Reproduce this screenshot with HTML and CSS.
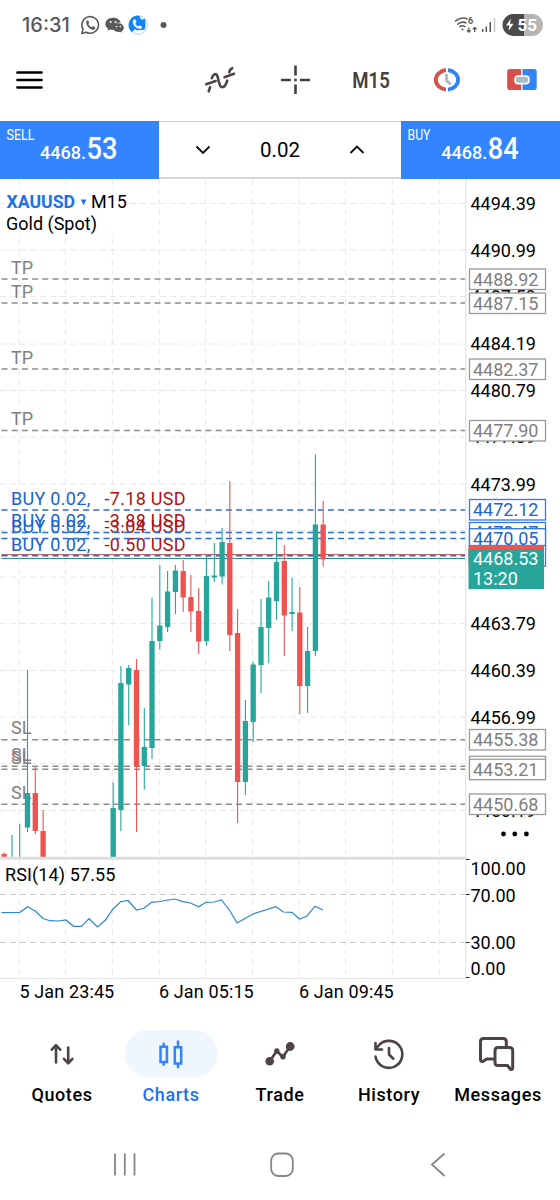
FILE: index.html
```html
<!DOCTYPE html>
<html lang="en">

<head>
    <meta charset="utf-8">
    <meta name="viewport" content="width=device-width, initial-scale=1.0">
    <title>XAUUSD M15</title>
    <link rel="stylesheet" href="styles.css">
</head>

<body>
    <header class="status">
        <span class="time">16:31</span>
        <svg class="status-icons" width="92" height="24" viewBox="78.500 13 92 24">
            <!-- whatsapp -->
            <path class="g-line" d="M82.400 33.400l1.200-4.200a8.300 8.300 0 1 1 3.100 3z" />
            <path class="g-fill" d="M87 20.800c.8-.9 1.700-.6 2 .2l.6 1.500c.2.600-.8 1.300-.6 1.700.6 1.300 1.700 2.200 3 2.800.5.200 1.200-1 1.700-.8l1.700.9c.8.500.4 1.800-.5 2.300-3.600 1.900-9.600-4.400-7.900-8.600z" />
            <!-- wechat -->
            <path class="g-fill" d="M113.500 17.800c-4.500 0-7.600 2.900-7.600 6.200 0 2 1 3.700 2.700 4.800l-.6 2 2.500-1.200c1.200.3 2.300.4 3.600.3-.7-4.700 2.800-7.400 7.200-7.300-.8-2.900-4-4.800-7.800-4.800z" />
            <path class="g-fill" d="M118.800 23.200c3.200 0 5.500 2 5.500 4.500 0 1.500-.8 2.700-2 3.500l.4 1.600-1.900-1c-3.700.9-7.400-1-7.400-4.200 0-2.400 2.300-4.400 5.400-4.400z" />
            <g fill="#fff"><circle cx="111.200" cy="22" r="1" /><circle cx="116" cy="22" r="1" /><circle cx="117" cy="26.600" r=".8" /><circle cx="120.800" cy="26.600" r=".8" /></g>
            <!-- caller app -->
            <circle cx="138.700" cy="25" r="9.300" fill="#fff" stroke="#a9d3fb" />
            <path fill="#1583f5" d="M138.700 15.400a9.600 9.600 0 0 0-6.500 16.600l2.300-1.500.3-1.500 2.700 1.200 7.500-.5 1-3.500-.2-7.200-4.300.5-1.300-3.300z" />
            <path fill="#fff" d="M133.600 20l2-1 1.400 3-1.200 1.200c.5 1.500 1.500 2.600 3 3.300l1.400-1.200 2.500 1.600-.8 1.500c-4.500 1.500-9.700-3.500-8.300-8.400z" />
            <circle class="g-fill" cx="164" cy="25" r="3" />
        </svg>
        <svg class="status-right" width="92" height="26" viewBox="453 12 92 26">
            <g class="g-line">
                <path d="M455 21.500q6.500-5.500 12.500-2.500M457.200 24.500q4.700-3.800 9.300-1.500M459.300 27q3-2.500 6 0" />
                <path stroke-width="1.300" d="M468.800 27.500v4.500m-1.900-1.800l1.900 1.900 1.900-1.900M474.700 32v-4.500m-1.800 1.800l1.800-1.900 1.800 1.900" />
            </g>
            <circle class="g-fill" cx="462.500" cy="29.500" r="1" />
            <text class="wifi-six" x="468" y="24">6</text>
            <path stroke="#555" stroke-width="1.500" d="M482.700 32v-3M486.300 32v-5.500M490.300 32v-10" />
            <path stroke="#c4c4c4" stroke-width="1.500" d="M494.500 32V18" />
            <path fill="#4a4a4a" d="M524 14h-10.500a11 11 0 0 0 0 22H524z" />
            <path fill="#b5b5b5" d="M524 14h8a11 11 0 0 1 0 22h-8z" />
            <path fill="#fff" d="M511 18.500l-5 7h3.500l-1 5.500 5-7.300h-3.600z" />
            <text class="battery" x="517.500" y="31" textLength="19.500" lengthAdjust="spacingAndGlyphs">55</text>
        </svg>
    </header>

    <div class="toolbar">
        <svg class="menu" width="27" height="18" viewBox="0 0 27 18">
            <path stroke="#000" stroke-width="2.700" stroke-linecap="round" d="M1.500 1.500h24M1.500 9h24M1.500 16.500h24" />
        </svg>
        <div class="tools">
            <svg class="tool" width="32" height="28" viewBox="204 66 32 28">
                <path class="d-line" stroke-width="2.600" d="M206.200 84.200l9.500-3.200M224.500 77.200l9.500-3.400M208.700 91.200l1.400-4M211.800 78.200c1.300-4 3.800-5.200 5.200-3 2 3.300 1.500 12 5.200 12 3 0 4.300-4 5-6.500M229.300 72.200c.4-2 1.500-3.500 2.900-4" />
            </svg>
            <svg class="tool" width="32" height="32" viewBox="279.500 64 32 32">
                <path stroke="#453f3f" stroke-width="2.600" d="M281.500 80h9.800M300.500 80h10M296 65.500v10M296 84.500v9.500M294.700 80h2.600" />
            </svg>
            <svg class="tool" width="50" height="30" viewBox="346 65 50 30">
                <text class="tf" x="352.300" y="87.500" textLength="37.500" lengthAdjust="spacingAndGlyphs">M15</text>
            </svg>
            <svg class="tool" width="32" height="26" viewBox="431 67 32 26">
                <path fill="none" stroke="#d8504a" stroke-width="3.800" d="M445.900 70a11.800 9.900 0 0 0 0 19.600" />
                <path fill="none" stroke="#3284f3" stroke-width="3.800" d="M448 70a11.800 9.900 0 0 1 0 19.600" />
                <path stroke="#aebac4" stroke-width="2.800" fill="none" d="M446.500 74v6.300l4.200 4.200" />
            </svg>
            <svg class="tool" width="32" height="26" viewBox="506.500 67 32 26">
                <path fill="#d8504a" d="M521.600 69h-11.400q-2.500 0-2.500 2.500v16q0 2.500 2.500 2.500h11.400z" />
                <path fill="#3284f3" d="M523 69h11.700q2.500 0 2.500 2.500v16q0 2.500-2.500 2.500H523z" />
                <rect x="515.500" y="76" width="14" height="7.600" rx="3.200" fill="#aebac4" stroke="#fff" stroke-width="1.600" />
            </svg>
        </div>
    </div>

    <div class="deal">
        <svg class="side" width="159" height="58" viewBox="0 121 159 58">
            <text class="side-name" x="6.500" y="140" textLength="28" lengthAdjust="spacingAndGlyphs">SELL</text>
            <text class="side-int" x="40" y="159" textLength="46" lengthAdjust="spacingAndGlyphs">4468.</text>
            <text class="side-dec" x="86.500" y="159" textLength="31" lengthAdjust="spacingAndGlyphs">53</text>
        </svg>
        <div class="lot">
            <svg width="16" height="10" viewBox="0 0 16 10"><path d="M1.500 1.500L8 8l6.500-6.500" /></svg>
            <span>0.02</span>
            <svg width="16" height="10" viewBox="0 0 16 10"><path d="M1.500 8L8 1.500 14.500 8" /></svg>
        </div>
        <svg class="side" width="159" height="58" viewBox="401 121 159 58">
            <text class="side-name" x="407.500" y="140" textLength="23" lengthAdjust="spacingAndGlyphs">BUY</text>
            <text class="side-int" x="441.300" y="159" textLength="46" lengthAdjust="spacingAndGlyphs">4468.</text>
            <text class="side-dec" x="487.800" y="159" textLength="31" lengthAdjust="spacingAndGlyphs">84</text>
        </svg>
    </div>

    <svg class="chart" width="560" height="833" viewBox="0 179 560 833">
        <!-- grid -->
        <path class="grid" d="M19.200 179V978M65.600 179V978M112.400 179V978M159.200 179V978M205.700 179V978M252.400 179V978M299 179V978M345.700 179V978M392.300 179V978M439.200 179V978" />
        <path class="grid" d="M0 203.500H465M0 250H465M0 296.500H465M0 344H465M0 390.500H465M0 437.200H465M0 484H465M0 530.500H465M0 577H465M0 623.500H465M0 670.500H465M0 717.200H465M0 763.500H465M0 810.500H465" />
        <path class="grid rsi-level" d="M0 894.500H465M0 942.500H465" />

        <!-- symbol -->
        <rect x="4" y="190" width="125" height="44" fill="#fff" />
        <text class="symbol" x="6.500" y="208" textLength="68.500" lengthAdjust="spacingAndGlyphs">XAUUSD</text>
        <path fill="#1a73e8" d="M80.800 199.500h5.600l-2.800 5.800z" />
        <text x="91" y="208">M15</text>
        <text x="6" y="230">Gold (Spot)</text>

        <!-- take profit / stop loss -->
        <g class="level">
            <text x="11" y="273.500">TP</text>
            <text x="11" y="298">TP</text>
            <text x="11" y="364">TP</text>
            <text x="11" y="425">TP</text>
            <text x="11" y="734.300">SL</text>
            <text x="11" y="761">SL</text>
            <text x="11" y="763.700">SL</text>
            <text x="11" y="799">SL</text>
        </g>
        <path class="dash dash-gray" d="M1.500 279H465M1.500 303H465M1.500 369H465M1.500 430.500H465M1.500 739.800H465M1.500 766.300H465M1.500 769.300H465M1.500 804.300H465" />

        <!-- positions -->
        <g class="pos">
            <text x="11" y="504.500">BUY 0.02,</text><text class="loss" x="104.500" y="504.500">-7.18 USD</text>
            <text x="11" y="527">BUY 0.02,</text><text class="loss" x="104.500" y="527">-3.88 USD</text>
            <text x="11" y="533">BUY 0.02,</text><text class="loss" x="104.500" y="533">-3.04 USD</text>
            <text x="11" y="550.500">BUY 0.02,</text><text class="loss" x="104.500" y="550.500">-0.50 USD</text>
        </g>
        <path class="dash dash-blue" d="M1.500 510H465M1.500 532.500H465M1.500 538.500H465" />
        <path stroke="#c0616b" d="M1.500 554.500H465" />
        <path class="dash dash-blue" d="M1.500 555.800H465" />
        <path stroke="#2a8f8c" d="M1.500 558.500H465" />

        <!-- wicks -->
        <path class="wick up" d="M12 835V857M19.700 824V857M27.500 670V832M113.200 782.500V857M120.900 666V831M128.700 665V725M144.300 708V789.500M152 597.500V759M159.800 565V649.500M167.600 571V632M175.400 565V614M206.500 555V645.500M214.300 543V582M222.100 528V584.500M245.400 700V795M253.200 662V742M261 599V693M268.700 581V663M276.500 531V620M292.100 578V631M307.600 627V713M315.400 454.500V656" />
        <path class="wick down" d="M4.200 852.500V857M35.300 767V834M43.100 810V857M136.500 659V832M183.200 560V612M190.900 575V632M198.700 588V654M229.800 481V651M237.600 609V823M284.300 545V656M299.800 587V714M323.200 501V566.500" />
        <!-- bodies -->
        <path class="body up" d="M27.500 793V827.500M113.200 808V857M120.900 683V810M128.700 668V684.500M144.300 747V766M152 641V748M159.800 625.500V641M167.600 591.500V627M175.400 570.500V592M206.500 576V641M214.300 575.500V577.500M222.100 542V576.500M245.400 721V782M253.200 664.500V722M261 627V665M268.700 597.500V628M276.500 562V601M292.100 612V614M307.600 651V686M315.400 524.500V651" />
        <path class="body down" d="M4.200 854V857M35.300 793V831M43.100 831V857M136.500 670V766.500M183.200 571V597.500M190.900 597V611.500M198.700 611V641.500M229.800 543V635M237.600 633V782M284.300 561V615.500M299.800 612.500V686M323.200 524.500V559.500" />

        <!-- RSI window -->
        <path class="frame" stroke-width="3" d="M0 858.200H466" />
        <path class="frame" d="M465.800 179V978.300M0 978.300H466" />
        <path stroke="#222" d="M466 859.500h3.500M466 894.500h3.500M466 942.500h3.500M466 977.500h3.500" />
        <text class="wide" x="5" y="880.500">RSI(14) 57.55</text>
        <polyline class="rsi" points="1.500,912.700 20,912.300 27.500,906.700 35.300,911 43,918.500 50,920.700 58.700,921 66,920 73.500,926.300 81.500,926.300 89,918.700 97.500,926.900 105.500,920 113,909 120.500,901.700 128,900.500 136.500,910 144,908.300 151.500,902.300 160,901.500 168,900 175,899 182,901.300 190.500,903 198.500,906.800 206,902.300 214,902 221.500,900 230,911 237,923 253,914 276,906.700 283.500,912 292,912.300 299.500,919 307,916 315,906.200 323,910" />

        <!-- price scale -->
        <text x="470.500" y="210">4494.39</text>
        <text x="470.500" y="256.500">4490.99</text>
        <text x="470.500" y="303.300">4487.59</text>
        <text x="470.500" y="350">4484.19</text>
        <text x="470.500" y="396.700">4480.79</text>
        <text x="470.500" y="443.300">4477.39</text>
        <text x="470.500" y="490.500">4473.99</text>
        <text x="470.500" y="630">4463.79</text>
        <text x="470.500" y="677">4460.39</text>
        <text x="470.500" y="723.500">4456.99</text>
        <text x="470.500" y="816.500">4450.19</text>
        <g class="tag">
            <rect x="469.500" y="269" width="76" height="20.500" /><text x="473" y="285.500">4488.92</text>
            <rect x="469.500" y="293" width="76" height="20.500" /><text x="473" y="309.500">4487.15</text>
            <rect x="469.500" y="359" width="76" height="20.500" /><text x="473" y="375.500">4482.37</text>
            <rect x="469.500" y="420.500" width="76" height="20.500" /><text x="473" y="437">4477.90</text>
            <rect x="469.500" y="729.500" width="76" height="20.500" /><text x="473" y="746.300">4455.38</text>
            <rect x="469.500" y="756.300" width="76" height="20.500" />
            <rect x="469.500" y="759.200" width="76" height="20.500" /><text x="473" y="775.800">4453.21</text>
            <rect x="469.500" y="794" width="76" height="20.500" /><text x="473" y="811">4450.68</text>
        </g>
        <g class="tag tag-blue">
            <rect x="469.500" y="499.500" width="76" height="20.500" /><text x="473" y="516.200">4472.12</text>
            <rect x="469.500" y="522.500" width="76" height="20.500" /><text x="473" y="539">4470.47</text>
            <rect x="469.500" y="528.700" width="76" height="20.500" /><text x="473" y="545">4470.05</text>
            <rect x="469.500" y="545.500" width="76" height="20.500" />
        </g>
        <rect x="468.500" y="545" width="75.500" height="20" fill="#ef5350" />
        <rect x="468.500" y="549" width="75.500" height="40" fill="#26a69a" />
        <text class="now" x="473" y="565">4468.53</text>
        <text class="now" x="473" y="585.300">13:20</text>
        <circle cx="503.500" cy="834" r="2.400" /><circle cx="514.800" cy="834" r="2.400" /><circle cx="526.400" cy="834" r="2.400" />

        <text x="470.500" y="875">100.00</text>
        <text x="470.500" y="901.500">70.00</text>
        <text x="470.500" y="949">30.00</text>
        <text x="470.500" y="975">0.00</text>

        <text class="wide" x="19.500" y="998">5 Jan 23:45</text>
        <text class="wide" x="159" y="998">6 Jan 05:15</text>
        <text class="wide" x="299" y="998">6 Jan 09:45</text>
    </svg>

    <nav class="tabs">
        <div class="tab">
            <div class="pill">
                <svg width="28" height="26" viewBox="48.500 1040.500 28 26">
                    <path class="d-line" d="M56.500 1062v-17m-4.200 4.200l4.200-4.500 4.200 4.500M68.700 1047v15.500m-4.200-4.200l4.200 4.500 4.200-4.500" />
                </svg>
            </div>
            <span>Quotes</span>
        </div>
        <div class="tab active">
            <div class="pill">
                <svg width="26" height="32" viewBox="158.500 1037.500 26 32">
                    <path fill="none" stroke="#3284ff" stroke-width="2.500" d="M161 1046.300h6.400v15.200H161zM164.200 1042.300v4M164.200 1061.500v3.800M175.300 1046.800h6.400v16.300h-6.400zM178.500 1040v6.800M178.500 1063v4.800" />
                </svg>
            </div>
            <span>Charts</span>
        </div>
        <div class="tab">
            <div class="pill">
                <svg width="32" height="28" viewBox="264.500 1039.500 32 28">
                    <path class="d-line" stroke-width="2.800" d="M270 1061l7.300-10.500 6 6 7.200-10.500" />
                    <g class="d-fill"><circle cx="270.200" cy="1060.700" r="4.300" /><circle cx="277.300" cy="1050.500" r="2.700" /><circle cx="283.500" cy="1056.200" r="2.700" /><circle cx="290.700" cy="1046" r="4.400" /></g>
                </svg>
            </div>
            <span>Trade</span>
        </div>
        <div class="tab">
            <div class="pill">
                <svg width="34" height="34" viewBox="371.500 1036.500 34 34">
                    <path class="d-line" d="M375 1056a13.500 13.500 0 1 0 2-9.500M375 1042.500v6.500h6.500M388.500 1047.500v6.500l4.300 4.200" />
                </svg>
            </div>
            <span>History</span>
        </div>
        <div class="tab">
            <div class="pill">
                <svg width="38" height="38" viewBox="479 1034.500 38 38">
                    <path class="d-line msg" d="M492.500 1058.500h-6l-3.200 2.300q-2.800 1-2.800-1.800V1041q0-3 3-3h19.800q3 0 3 3v5.500M498 1047h11.700q3 0 3 3v17.500q-.5 2.500-2.500 1l-2.700-3.500h-9.500q-3 0-3-3v-12q0-3 3-3z" />
                </svg>
            </div>
            <span>Messages</span>
        </div>
    </nav>

    <footer class="sysnav">
        <svg width="24" height="26" viewBox="0 0 24 26"><path d="M2 1.500v22M11.800 1.500v22M21.500 1.500v22" /></svg>
        <svg width="24" height="26" viewBox="0 0 24 26"><rect x="1.200" y="1.500" width="21.600" height="22.500" rx="7" /></svg>
        <svg width="24" height="26" viewBox="0 0 24 26"><path d="M17.500 1.500L5 12.500l12.500 11.500" /></svg>
    </footer>
</body>

</html>
```
FILE: styles.css
```css
* {
    margin: 0;
    padding: 0;
    box-sizing: border-box;
}

body {
    width: 560px;
    height: 1200px;
    background-color: #fff;
    font-family: Roboto, "Liberation Sans", sans-serif;
    color: #000;
    overflow: hidden;
}

svg {
    display: block;
    flex: none;
}

/* status bar */
.status {
    display: flex;
    align-items: center;
    height: 50px;
    padding: 0 15px 0 22px;
}

.time {
    width: 56px;
    font-family: Inter, Roboto, sans-serif;
    font-size: 20px;
    font-weight: 500;
    color: #5a5a5a;
}

.status-right {
    margin-left: auto;
}

.g-line {
    fill: none;
    stroke: #5a5a5a;
    stroke-width: 1.6;
}

.g-fill {
    fill: #5a5a5a;
}

.wifi-six {
    font-size: 9px;
    font-weight: 700;
    fill: #5a5a5a;
}

.battery {
    font-size: 17px;
    font-weight: 700;
    fill: #fff;
}

/* toolbar */
.toolbar {
    display: flex;
    align-items: center;
    height: 71px;
    padding: 0 0 12px 15.5px;
}

.tools {
    display: grid;
    grid-template-columns: repeat(5, 75.6px);
    justify-items: center;
    align-items: center;
    margin-left: auto;
}

.tf {
    font-size: 22px;
    font-weight: 600;
    fill: #453f3f;
}

.d-line {
    fill: none;
    stroke: #4d4444;
    stroke-width: 2.6;
    stroke-linecap: round;
    stroke-linejoin: round;
}

.msg {
    stroke-width: 3;
}

.d-fill {
    fill: #4d4444;
}

/* one click trading */
.deal {
    display: flex;
    height: 58px;
}

.side {
    background-color: #3284ff;
    fill: #fff;
}

.side-name {
    font-size: 15.5px;
}

.side-int {
    font-size: 19px;
    font-weight: 500;
}

.side-dec {
    font-size: 31px;
    font-weight: 500;
}

.lot {
    display: flex;
    flex: 1;
    align-items: center;
    justify-content: space-between;
    padding: 0 36px;
    border-top: 1px solid #ccc;
    border-bottom: 2px solid #d8d8d8;
    font-size: 20px;
}

.lot span {
    font-size: 20.5px;
}

.lot path {
    fill: none;
    stroke: #111;
    stroke-width: 1.9;
}

/* chart */
.chart {
    font-size: 18px;
}

.wide {
    letter-spacing: .12px;
}

.grid {
    stroke: #e8e8e8;
    stroke-dasharray: 6 4;
}

.rsi-level {
    stroke: #c8c8c8;
}

.frame {
    fill: none;
    stroke: #dedede;
}

.symbol {
    font-weight: 700;
    fill: #1a73e8;
}

.level {
    fill: #808080;
}

.dash {
    stroke-width: 1.4;
    stroke-dasharray: 6 4.2;
}

.dash-gray {
    stroke: #8c8c8c;
}

.dash-blue {
    stroke: #2b6bd6;
}

.pos {
    fill: #1a62cc;
    letter-spacing: .3px;
}

.loss {
    fill: #b01212;
}

.wick {
    stroke-width: 1.1;
}

.body {
    stroke-width: 5.3;
}

.up {
    stroke: #26a69a;
}

.down {
    stroke: #ef5350;
}

.rsi {
    fill: none;
    stroke: #2f86d0;
    stroke-width: 1.2;
}

.tag rect {
    fill: #fff;
    stroke: #9a9a9a;
    stroke-width: 1.3;
}

.tag text {
    fill: #808080;
}

.tag-blue rect {
    stroke: #3478e0;
}

.tag-blue text {
    fill: #2563c4;
}

.now {
    fill: #fff;
}

/* bottom tabs */
.tabs {
    display: grid;
    grid-template-columns: repeat(5, 109px);
    padding: 18px 0 0 7.5px;
    height: 118px;
}

.tab {
    display: flex;
    flex-direction: column;
    align-items: center;
    gap: 7px;
    font-size: 18px;
    font-weight: 500;
    letter-spacing: .6px;
}

.pill {
    display: flex;
    align-items: center;
    justify-content: center;
    width: 93px;
    height: 47px;
    border-radius: 24px;
}

.active {
    color: #1a73e8;
}

.active .pill {
    background-color: #eff6fd;
}

/* android buttons */
.sysnav {
    display: flex;
    align-items: center;
    justify-content: space-between;
    height: 70px;
    padding: 0 109px 0 112.5px;
}

.sysnav svg {
    fill: none;
    stroke: #858585;
    stroke-width: 1.8;
}
```
